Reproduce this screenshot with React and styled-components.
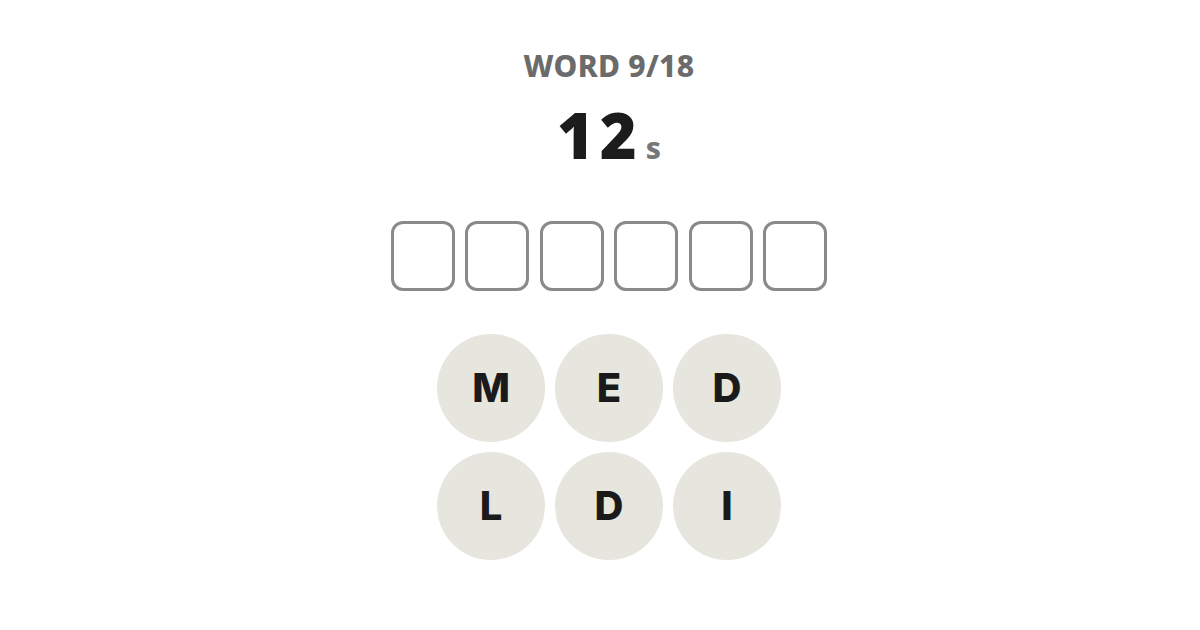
import React from "react";
import styled, { createGlobalStyle } from "styled-components";

const Global = createGlobalStyle`
  html, body { margin: 0; padding: 0; background: #ffffff; }
  body { font-family: "Noto Sans", "DejaVu Sans", sans-serif; }
`;

const Page = styled.div`
  width: 1200px;
  height: 630px;
  display: flex;
  flex-direction: column;
  align-items: center;
  padding: 46px 0 0 18px;
  box-sizing: border-box;
`;

const Counter = styled.div`
  font-size: 30px;
  font-weight: 800;
  color: #6b6b6b;
  letter-spacing: 0.3px;
  line-height: 40px;
`;

const Timer = styled.div`
  margin-top: 12px;
  display: flex;
  align-items: baseline;
  line-height: 74px;
`;

const Seconds = styled.span`
  font-size: 63px;
  font-weight: 900;
  color: #1c1c1c;
  letter-spacing: 6px;
`;

const Unit = styled.span`
  font-size: 30px;
  font-weight: 800;
  color: #777777;
  margin-left: 3px;
`;

const Slots = styled.div`
  margin-top: 36px;
  display: flex;
  gap: 10.6px;
`;

const Slot = styled.div`
  width: 64px;
  height: 70px;
  box-sizing: border-box;
  border: 3px solid #8a8a8a;
  border-radius: 12px;
`;

const Grid = styled.div`
  margin-top: 43px;
  display: grid;
  grid-template-columns: repeat(3, 108px);
  gap: 10px;
`;

const Tile = styled.div`
  width: 108px;
  height: 108px;
  border-radius: 50%;
  background: #e6e5de;
  display: flex;
  align-items: center;
  justify-content: center;
  padding-bottom: 2px;
  box-sizing: border-box;
  font-family: Inter, "Noto Sans", sans-serif;
  font-size: 40px;
  font-weight: 800;
  color: #1a1a1a;
`;

const letters = ["M", "E", "D", "L", "D", "I"];

export default function App() {
  return (
    <>
      <Global />
      <Page>
        <Counter>WORD 9/18</Counter>
        <Timer>
          <Seconds>12</Seconds>
          <Unit>s</Unit>
        </Timer>
        <Slots>
          {Array.from({ length: 6 }).map((_, i) => (
            <Slot key={i} />
          ))}
        </Slots>
        <Grid>
          {letters.map((l, i) => (
            <Tile key={i}>{l}</Tile>
          ))}
        </Grid>
      </Page>
    </>
  );
}
